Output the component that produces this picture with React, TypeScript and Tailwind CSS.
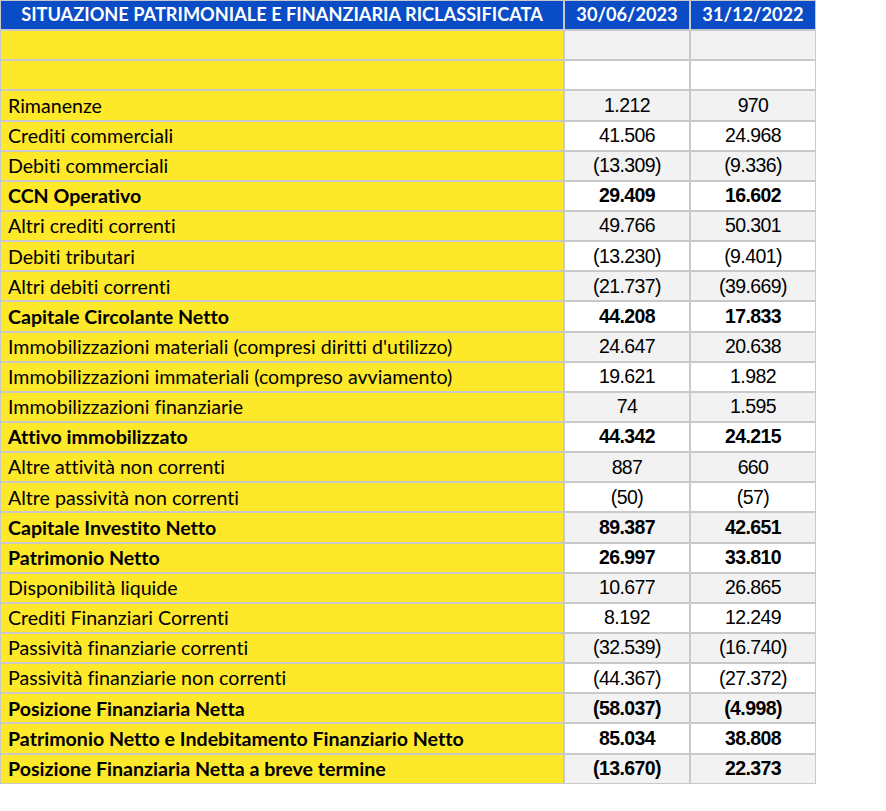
const rows: { label: string; a: string; b: string; bold?: boolean }[] = [
  { label: "", a: "", b: "" },
  { label: "", a: "", b: "" },
  { label: "Rimanenze", a: "1.212", b: "970" },
  { label: "Crediti commerciali", a: "41.506", b: "24.968" },
  { label: "Debiti commerciali", a: "(13.309)", b: "(9.336)" },
  { label: "CCN Operativo", a: "29.409", b: "16.602", bold: true },
  { label: "Altri crediti correnti", a: "49.766", b: "50.301" },
  { label: "Debiti tributari", a: "(13.230)", b: "(9.401)" },
  { label: "Altri debiti correnti", a: "(21.737)", b: "(39.669)" },
  { label: "Capitale Circolante Netto", a: "44.208", b: "17.833", bold: true },
  { label: "Immobilizzazioni materiali (compresi diritti d'utilizzo)", a: "24.647", b: "20.638" },
  { label: "Immobilizzazioni immateriali (compreso avviamento)", a: "19.621", b: "1.982" },
  { label: "Immobilizzazioni finanziarie", a: "74", b: "1.595" },
  { label: "Attivo immobilizzato", a: "44.342", b: "24.215", bold: true },
  { label: "Altre attività non correnti", a: "887", b: "660" },
  { label: "Altre passività non correnti", a: "(50)", b: "(57)" },
  { label: "Capitale Investito Netto", a: "89.387", b: "42.651", bold: true },
  { label: "Patrimonio Netto", a: "26.997", b: "33.810", bold: true },
  { label: "Disponibilità liquide", a: "10.677", b: "26.865" },
  { label: "Crediti Finanziari Correnti", a: "8.192", b: "12.249" },
  { label: "Passività finanziarie correnti", a: "(32.539)", b: "(16.740)" },
  { label: "Passività finanziarie non correnti", a: "(44.367)", b: "(27.372)" },
  { label: "Posizione Finanziaria Netta", a: "(58.037)", b: "(4.998)", bold: true },
  { label: "Patrimonio Netto e Indebitamento Finanziario Netto", a: "85.034", b: "38.808", bold: true },
  { label: "Posizione Finanziaria Netta a breve termine", a: "(13.670)", b: "22.373", bold: true },
];

export default function App() {
  return (
    <div className="min-h-screen bg-white [font-variant-ligatures:none]">
      <div className="grid w-[816px] grid-cols-[562px_124px_124px] gap-[2px] border-[1px] border-[#c9c9c9] bg-[#c9c9c9]">
        {/* Header */}
        <div className="flex h-[28.15px] items-center justify-center bg-[#0a4bc6] font-['Lato',sans-serif] text-[18.2px] font-bold text-white">
          SITUAZIONE PATRIMONIALE E FINANZIARIA RICLASSIFICATA
        </div>
        <div className="flex h-[28.15px] items-center justify-center bg-[#0a4bc6] font-['Lato',sans-serif] text-[18.2px] font-bold text-white">
          30/06/2023
        </div>
        <div className="flex h-[28.15px] items-center justify-center bg-[#0a4bc6] font-['Lato',sans-serif] text-[18.2px] font-bold text-white">
          31/12/2022
        </div>

        {rows.map((r, i) => {
          const shade = i % 2 === 0 ? "bg-[#f2f2f2]" : "bg-white";
          const weight = r.bold ? "font-bold" : "font-normal";
          return [
            <div
              key={`l${i}`}
              className={`flex h-[28.15px] items-center bg-[#fde82a] pl-[7px] font-['Lato',sans-serif] text-[19.6px] text-black ${weight}`}
            >
              {r.label}
            </div>,
            <div
              key={`a${i}`}
              className={`flex h-[28.15px] items-center justify-center ${shade} font-['Liberation_Sans',Arial,sans-serif] text-[19.5px] tracking-[-0.6px] text-black ${weight}`}
            >
              {r.a}
            </div>,
            <div
              key={`b${i}`}
              className={`flex h-[28.15px] items-center justify-center ${shade} font-['Liberation_Sans',Arial,sans-serif] text-[19.5px] tracking-[-0.6px] text-black ${weight}`}
            >
              {r.b}
            </div>,
          ];
        })}
      </div>
    </div>
  );
}
